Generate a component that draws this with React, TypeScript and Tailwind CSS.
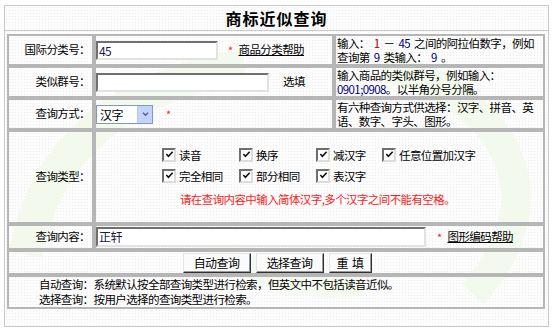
import React from 'react'

const font = { fontFamily: '"Noto Sans CJK SC", "Liberation Sans", sans-serif' }

function Check({ label }: { label: string }) {
  return (
    <label className="flex items-center h-[14px]">
      <span className="relative w-[14px] h-[14px] bg-white border-2 border-t-[#6f6f6f] border-l-[#6f6f6f] border-b-[#dcdcdc] border-r-[#dcdcdc] shrink-0">
        <svg viewBox="0 0 10 10" className="absolute left-[1px] top-0 w-[9px] h-[9px]">
          <path d="M1.5 4.5 L3.8 7 L8.5 2" fill="none" stroke="#111" strokeWidth="1.8" />
        </svg>
      </span>
      <span className="ml-[3px] leading-[14px]">{label}</span>
    </label>
  )
}

function TextBox({ value, w, h }: { value?: string; w: string; h: string }) {
  return (
    <div
      className={`${w} ${h} bg-white border-2 border-t-[#707070] border-l-[#707070] border-b-[#e2e2e2] border-r-[#e2e2e2] text-[12px] leading-[15px] pl-[1px] text-[#1a1a4a] overflow-hidden`}
    >
      {value}
    </div>
  )
}

function Btn({ children, w }: { children: React.ReactNode; w: string }) {
  return (
    <div
      className={`${w} h-[20px] flex items-center justify-center bg-[#fbfbfb] border border-t-[#e4e4e4] border-l-[#e4e4e4] border-r-[#303030] border-b-[#303030] shadow-[inset_-1px_-1px_0_#9a9a9a] text-[12px]`}
    >
      {children}
    </div>
  )
}

function Num({ children, red, gap = true }: { children: React.ReactNode; red?: boolean; gap?: boolean }) {
  return (
    <span
      className={`inline-block leading-[14px] align-top ${gap ? 'mx-[4px]' : ''} ${red ? 'text-[#990000]' : 'text-[#000080]'}`}
    >
      {children}
    </span>
  )
}

export default function App() {
  const td = 'border-2 border-[#b6b6b6] p-0 align-middle'
  return (
    <div className="w-[553px] h-[332px] bg-white pl-[4px] pt-[5px] text-black" style={font}>
      <div className="relative w-[545px] h-[322px] border border-[#c9c9c9] bg-[radial-gradient(#ededed_0.6px,#fdfdfd_0.6px)] bg-[length:3px_3px]">
        {/* faint logo watermark */}
        <svg className="absolute inset-0 w-full h-full pointer-events-none" viewBox="0 0 545 322">
          <path d="M 20 250 C 40 140, 120 80, 240 60" fill="none" stroke="#f4f9ee" strokeWidth="34" />
          <path d="M 380 60 C 500 90, 560 190, 470 290" fill="none" stroke="#f4f9ee" strokeWidth="30" />
          <path d="M 200 230 C 240 270, 300 290, 360 280" fill="none" stroke="#f5faf0" strokeWidth="22" />
        </svg>

        <div className="relative h-[25px] border-b border-[#c9c9c9] flex items-center justify-center text-[16px] font-bold tracking-[1px]">
          商标近似查询
        </div>

        <table className="relative mt-[3px] ml-[2px] w-[538px] table-fixed border-separate border-spacing-0 text-[11.5px] tracking-[-0.6px]">
          <colgroup>
            <col className="w-[87px]" />
            <col className="w-[240px]" />
            <col className="w-[211px]" />
          </colgroup>
          <tbody>
            <tr className="h-[32px]">
              <td className={`${td} text-right pr-[2px]`}>国际分类号：</td>
              <td className={td}>
                <div className="flex items-center">
                  <TextBox value="45" w="w-[122px]" h="h-[19px]" />
                  <span className="ml-[10px] text-[#ff2020] text-[11px]">*</span>
                  <a className="ml-[6px] underline">商品分类帮助</a>
                </div>
              </td>
              <td className={`${td} pl-[1px] leading-[14px] whitespace-nowrap`}>
                输入：<Num red>1</Num>－<Num>45</Num>之间的阿拉伯数字，例如
                <br />
                查询第<Num>9</Num>类输入：<Num>9</Num>。
              </td>
            </tr>
            <tr className="h-[32px]">
              <td className={`${td} text-right pr-[2px]`}>类似群号：</td>
              <td className={td}>
                <div className="flex items-center">
                  <TextBox w="w-[173px]" h="h-[19px]" />
                  <span className="ml-[14px]">选填</span>
                </div>
              </td>
              <td className={`${td} pl-[1px] leading-[14px] whitespace-nowrap`}>
                输入商品的类似群号，例如输入：
                <br />
                <Num gap={false}>0901;0908</Num>。以半角分号分隔。
              </td>
            </tr>
            <tr className="h-[31px]">
              <td className={`${td} text-right pr-[2px]`}>查询方式：</td>
              <td className={td}>
                <div className="flex items-center">
                  <div className="w-[57px] h-[19px] flex items-center bg-white border border-[#7f9db9]">
                    <span className="flex-1 pl-[3px] text-[12px] leading-[17px]">汉字</span>
                    <span className="w-[15px] h-[17px] flex items-center justify-center bg-[#c3d3fd] border-l border-[#b8c8f0]">
                      <svg viewBox="0 0 8 6" className="w-[7px] h-[5px]">
                        <path d="M1 1 L4 4 L7 1" fill="none" stroke="#4d6185" strokeWidth="1.6" />
                      </svg>
                    </span>
                  </div>
                  <span className="ml-[13px] text-[#ff2020] text-[11px]">*</span>
                </div>
              </td>
              <td className={`${td} pl-[1px] leading-[14px] whitespace-nowrap`}>
                有六种查询方式供选择：汉字、拼音、英
                <br />
                语、数字、字头、图形。
              </td>
            </tr>
            <tr className="h-[94px]">
              <td className={`${td} text-right pr-[2px]`}>查询类型：</td>
              <td className={td} colSpan={2}>
                <div className="flex flex-col items-center pl-[2px]">
                  <div className="grid grid-cols-[77px_77px_66px_97px] gap-y-[7px]">
                    <Check label="读音" />
                    <Check label="换序" />
                    <Check label="减汉字" />
                    <Check label="任意位置加汉字" />
                    <Check label="完全相同" />
                    <Check label="部分相同" />
                    <Check label="表汉字" />
                  </div>
                  <div className="mt-[9px] text-[#ff1a1a] leading-[14px] pr-[6px]">
                    请在查询内容中输入简体汉字,多个汉字之间不能有空格。
                  </div>
                </div>
              </td>
            </tr>
            <tr className="h-[26px]">
              <td className={`${td} text-right pr-[2px]`}>查询内容：</td>
              <td className={td} colSpan={2}>
                <div className="flex items-center">
                  <TextBox value="正轩" w="w-[330px]" h="h-[20px]" />
                  <span className="ml-[11px] text-[#ff2020] text-[11px]">*</span>
                  <a className="ml-[6px] underline">图形编码帮助</a>
                </div>
              </td>
            </tr>
            <tr className="h-[25px]">
              <td className={td} colSpan={3}>
                <div className="flex justify-center gap-[5px] pl-[2px]">
                  <Btn w="w-[68px]">自动查询</Btn>
                  <Btn w="w-[68px]">选择查询</Btn>
                  <Btn w="w-[43px]">重&nbsp;&nbsp;填</Btn>
                </div>
              </td>
            </tr>
            <tr className="h-[32px]">
              <td className={`${td} pl-[30px] leading-[15px]`} colSpan={3}>
                <div>自动查询：系统默认按全部查询类型进行检索，但英文中不包括读音近似。</div>
                <div>选择查询：按用户选择的查询类型进行检索。</div>
              </td>
            </tr>
          </tbody>
        </table>
      </div>
    </div>
  )
}
